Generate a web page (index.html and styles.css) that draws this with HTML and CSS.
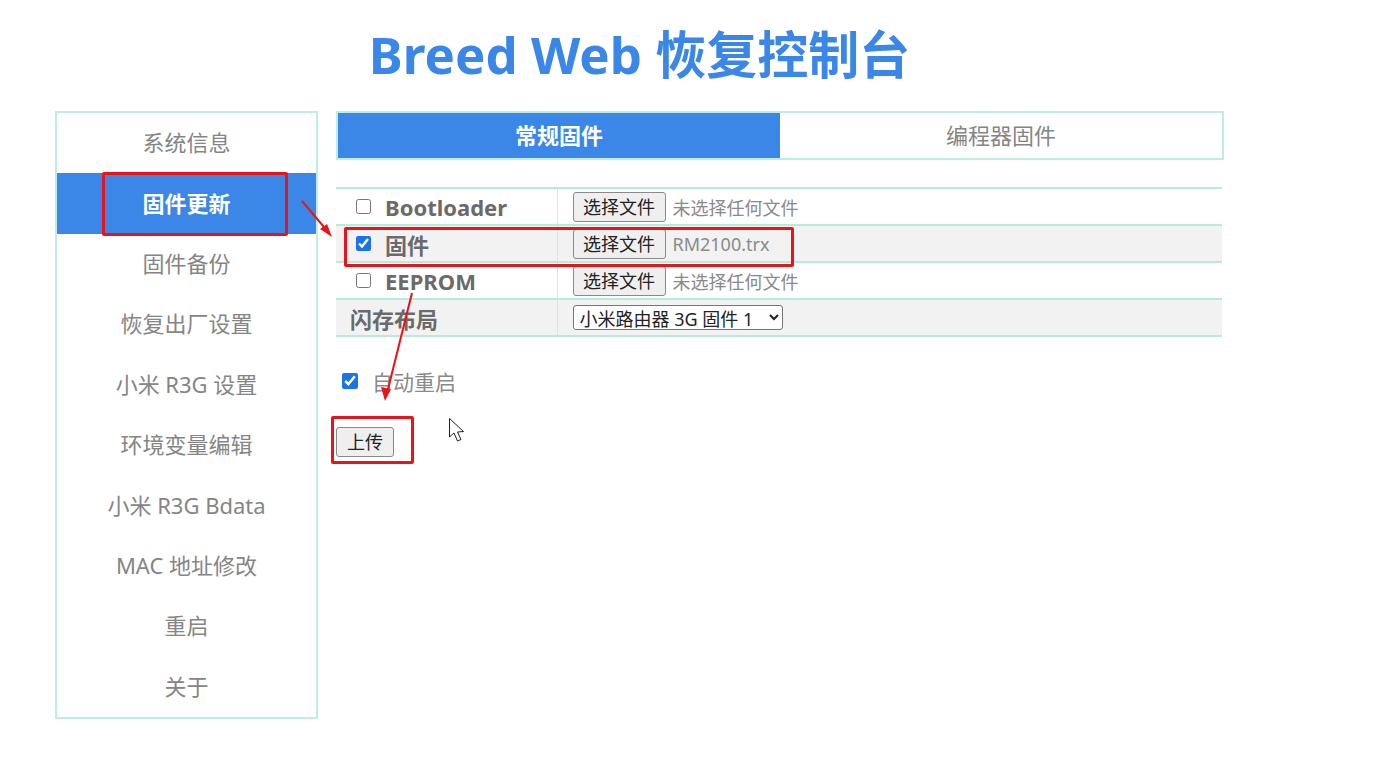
FILE: index.html
```html
<!DOCTYPE html>
<html lang="zh-CN">
<head>
<meta charset="utf-8">
<title>Breed Web 恢复控制台</title>
<link rel="stylesheet" href="styles.css">
</head>
<body>
<div class="page">
  <h1 class="title">Breed Web 恢复控制台</h1>
  <div class="layout">
    <ul class="sidebar">
      <li class="nav-item">系统信息</li>
      <li class="nav-item active">固件更新</li>
      <li class="nav-item">固件备份</li>
      <li class="nav-item">恢复出厂设置</li>
      <li class="nav-item">小米 R3G 设置</li>
      <li class="nav-item">环境变量编辑</li>
      <li class="nav-item">小米 R3G Bdata</li>
      <li class="nav-item">MAC 地址修改</li>
      <li class="nav-item">重启</li>
      <li class="nav-item">关于</li>
    </ul>
    <div class="main">
      <div class="tabs">
        <div class="tab active">常规固件</div>
        <div class="tab">编程器固件</div>
      </div>
      <table class="fw-table">
        <tr>
          <td class="label-cell"><label class="check-label"><input type="checkbox" class="cb">Bootloader</label></td>
          <td class="file-cell"><button class="btn">选择文件</button><span class="file-name">未选择任何文件</span></td>
        </tr>
        <tr class="alt">
          <td class="label-cell"><label class="check-label"><input type="checkbox" class="cb" checked>固件</label></td>
          <td class="file-cell"><button class="btn">选择文件</button><span class="file-name">RM2100.trx</span></td>
        </tr>
        <tr>
          <td class="label-cell"><label class="check-label"><input type="checkbox" class="cb">EEPROM</label></td>
          <td class="file-cell"><button class="btn">选择文件</button><span class="file-name">未选择任何文件</span></td>
        </tr>
        <tr class="alt">
          <td class="label-cell plain">闪存布局</td>
          <td class="file-cell"><select class="layout-select"><option>小米路由器 3G 固件 1</option></select></td>
        </tr>
      </table>
      <label class="auto-reboot"><input type="checkbox" class="cb" checked>自动重启</label>
      <div class="upload-row"><button class="btn upload">上传</button></div>
    </div>
  </div>

  <div class="mark mark-nav"></div>
  <div class="mark mark-row"></div>
  <div class="mark mark-upload"></div>
  <svg class="overlay" width="1380" height="769" viewBox="0 0 1380 769">
    <g stroke="#e8141a" stroke-width="2" fill="none">
      <line x1="302" y1="201" x2="329" y2="233"/>
      <line x1="412" y1="293" x2="387" y2="393"/>
    </g>
    <g fill="#e8141a">
      <polygon points="332,237 320,229 327,224"/>
      <polygon points="385,401 381,387 391,389"/>
    </g>
    <path d="M449.5 418.5 L449.5 437 L454 433 L457.5 441 L461 439.5 L457.5 432 L463.5 431.5 Z" fill="#fff" stroke="#222" stroke-width="1" stroke-linejoin="round"/>
  </svg>
</div>
</body>
</html>
```

FILE: styles.css
```css
* { box-sizing: border-box; }
html, body { margin: 0; padding: 0; background: #fff; }
body {
  font-family: "Noto Sans", "Noto Sans CJK SC", sans-serif;
  color: #777;
}
.page {
  position: relative;
  width: 1380px;
  height: 769px;
  padding-left: 55px;
  overflow: hidden;
}
.title {
  width: 1169px;
  margin: 0;
  height: 111px;
  padding-top: 19px;
  text-align: center;
  font-family: "Noto Sans", "Noto Sans CJK SC", sans-serif;
  font-size: 51px;
  line-height: 70px;
  font-weight: 700;
  color: #3a87e8;
}
.layout {
  display: flex;
  gap: 18px;
  width: 1169px;
}
.sidebar {
  list-style: none;
  margin: 0;
  padding: 0;
  width: 263px;
  height: 608px;
  border: 2px solid #bdeee2;
}
.nav-item {
  height: 60.4px;
  display: flex;
  align-items: center;
  justify-content: center;
  padding-bottom: 4px;
  font-size: 22px;
  color: #858585;
}
.nav-item.active {
  background: #3a87e8;
  color: #fff;
  font-weight: 700;
}
.main {
  width: 888px;
}
.tabs {
  display: flex;
  height: 49px;
  border: 2px solid #bdeee2;
}
.tab {
  flex: 1;
  display: flex;
  align-items: center;
  justify-content: center;
  padding-bottom: 4px;
  font-size: 22px;
  color: #858585;
}
.tab.active {
  background: #3a87e8;
  color: #fff;
  font-weight: 700;
}
.fw-table {
  margin-top: 27px;
  width: 886px;
  border-collapse: collapse;
  border-top: 2px solid #b5ecde;
}
.fw-table tr {
  height: 37px;
  border-bottom: 2px solid #b5ecde;
}
.fw-table tr.alt { background: #f2f2f2; }
.fw-table td { padding: 0; vertical-align: middle; }
.label-cell {
  width: 221px;
  padding-left: 14px !important;
  border-right: 1px solid #c8efe4;
  font-size: 22px;
  font-weight: 700;
  color: #6a6a6a;
}
.check-label {
  display: flex;
  align-items: center;
}
.cb {
  width: 15px;
  height: 15px;
  margin: 0 14px 0 6px;
  accent-color: #1a73e8;
}
.file-cell {
  padding-left: 15px !important;
}
.btn {
  font-family: "Noto Sans", "Noto Sans CJK SC", sans-serif;
  font-size: 18px;
  line-height: 1;
  color: #222;
  background: #efefef;
  border: 1px solid #8a8a8a;
  border-radius: 3px;
  height: 30px;
  width: 93px;
  padding: 0;
  vertical-align: middle;
}
.file-name {
  margin-left: 7px;
  font-size: 18px;
  color: #8a8a8a;
  vertical-align: middle;
}
.layout-select {
  font-family: "Noto Sans", "Noto Sans CJK SC", sans-serif;
  font-size: 18px;
  width: 210px;
  height: 25px;
  padding: 0 2px;
  color: #222;
  background: #fff;
  border: 1px solid #767676;
  border-radius: 3px;
}
.auto-reboot {
  display: flex;
  align-items: center;
  margin-top: 29px;
  font-size: 21px;
  color: #8a8a8a;
}
.auto-reboot .cb {
  width: 16px;
  height: 16px;
  margin: 0 14px 0 6px;
}
.upload-row {
  margin-top: 31px;
}
.btn.upload {
  width: 58px;
  height: 30px;
}
.mark {
  position: absolute;
  border: 3px solid #e8141a;
  border-radius: 2px;
}
.mark-nav { left: 102px; top: 172px; width: 186px; height: 64px; }
.mark-row { left: 344px; top: 227px; width: 450px; height: 40px; }
.mark-upload { left: 331px; top: 416px; width: 83px; height: 48px; }
.overlay {
  position: absolute;
  left: 0;
  top: 0;
  pointer-events: none;
}
```
